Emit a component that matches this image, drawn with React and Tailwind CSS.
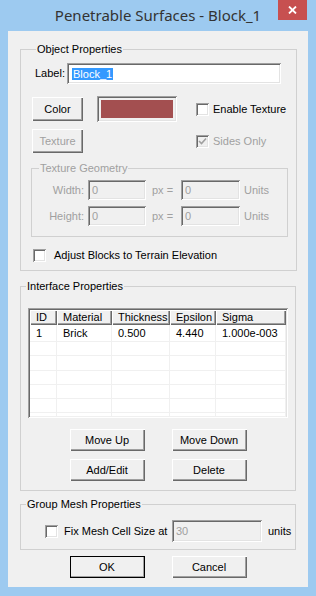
import React from 'react';

const raised =
  'shadow-[inset_1px_1px_0_#ffffff,inset_-1px_-1px_0_#696969,inset_-2px_-2px_0_#a0a0a0]';
const sunken =
  'shadow-[inset_1px_1px_0_#a0a0a0,inset_-1px_-1px_0_#ffffff,inset_2px_2px_0_#696969,inset_-2px_-2px_0_#e3e3e3]';

const Btn = ({ children, disabled, isDefault, className = '' }) => (
  <div
    className={`flex items-center justify-center shrink-0 bg-[#f0f0f0] ${raised} ${
      disabled ? 'text-[#a0a0a0]' : 'text-black'
    } ${isDefault ? 'outline outline-1 outline-black -outline-offset-1' : ''} ${className}`}
  >
    {children}
  </div>
);

const Check = ({ checked, disabled }) => (
  <div
    className={`w-[13px] h-[13px] shrink-0 flex items-center justify-center ${sunken} ${
      disabled ? 'bg-[#f0f0f0]' : 'bg-white'
    }`}
  >
    {checked && (
      <svg width="9" height="9" viewBox="0 0 9 9">
        <path d="M1 4 L3.5 6.5 L8 1.5" fill="none" stroke={disabled ? '#a0a0a0' : '#000'} strokeWidth="1.6" />
      </svg>
    )}
  </div>
);

const Field = ({ value, className = '', disabled }) => (
  <div
    className={`flex items-center shrink-0 pl-[4px] ${sunken} ${
      disabled ? 'bg-[#f0f0f0] text-[#a0a0a0]' : 'bg-white text-black'
    } ${className}`}
  >
    {value}
  </div>
);

const Group = ({ title, disabled, children, className = '', titleClass = 'ml-[5px]' }) => (
  <fieldset className={`border border-[#d0d0d0] ${className}`}>
    <legend className={`${titleClass} px-[1px] leading-[14px] ${disabled ? 'text-[#a0a0a0]' : 'text-black'}`}>
      {title}
    </legend>
    {children}
  </fieldset>
);

const cols = ['ID', 'Material', 'Thickness', 'Epsilon', 'Sigma'];
const rowHeights = ['h-[14px]', 'h-[15px]', 'h-[14px]', 'h-[14px]', 'h-[14px]', 'h-[4px]'];

export default function App() {
  return (
    <div
      className="w-[316px] h-[596px] bg-[#9dcaf0] flex flex-col px-[8px] pb-[9px] text-[11px] leading-[13px] whitespace-nowrap"
      style={{ fontFamily: '"Liberation Sans", Arial, sans-serif' }}
    >
      <div className="h-[31px] relative flex justify-center shrink-0">
        <span
          className="mt-[5px] text-[15px] leading-[20px] text-[#333333]"
          style={{ fontFamily: '"Noto Sans", "Open Sans", sans-serif' }}
        >
          Penetrable Surfaces - Block_1
        </span>
        <div className="absolute right-[1px] top-0 w-[29px] h-[20px] bg-[#c75050] flex items-center justify-center">
          <svg width="9" height="8" viewBox="0 0 9 8">
            <path d="M1 0.5 L8 7.5 M8 0.5 L1 7.5" stroke="#fff" strokeWidth="1.8" />
          </svg>
        </div>
      </div>

      <div className="flex-1 bg-[#f0f0f0] px-[12px] flex flex-col">
        {/* Object Properties */}
        <Group title="Object Properties" className="mt-[11px] pl-[10px] pr-[8px] pb-[8px]">
          <div className="flex items-center mt-[7px] pl-[1px]">
            <span className="w-[35px] pl-[3px]">Label:</span>
            <div className={`w-[214px] h-[21px] bg-white flex items-center pl-[5px] ${sunken}`}>
              <span className="bg-[#3399ff] text-white px-[1px] leading-[12px]">Block_1</span>
            </div>
          </div>

          <div className="flex items-center mt-[12px] pl-[1px]">
            <Btn className="w-[51px] h-[24px]">Color</Btn>
            <div className={`ml-[14px] w-[80px] h-[26px] p-[4px] bg-[#f0f0f0] ${sunken}`}>
              <div className="w-full h-full bg-[#a34f50]" />
            </div>
            <div className="ml-[19px] flex items-center gap-[4px]">
              <Check />
              <span>Enable Texture</span>
            </div>
          </div>

          <div className="flex items-center mt-[7px] pl-[1px]">
            <Btn disabled className="w-[51px] h-[24px]">Texture</Btn>
            <div className="ml-[113px] flex items-center gap-[4px] text-[#a0a0a0]">
              <Check checked disabled />
              <span>Sides Only</span>
            </div>
          </div>

          <Group title="Texture Geometry" disabled titleClass="ml-[7px]" className="mt-[8px] w-[257px] pb-[10px]">
            {['Width:', 'Height:'].map((lbl, i) => (
              <div key={lbl} className={`flex items-center text-[#a0a0a0] ${i === 0 ? 'mt-[5px]' : 'mt-[6px]'}`}>
                <span className="w-[52px] text-right">{lbl}</span>
                <Field disabled value="0" className="ml-[4px] w-[58px] h-[20px]" />
                <span className="w-[35px] pl-[6px]">px =</span>
                <Field disabled value="0" className="w-[59px] h-[20px]" />
                <span className="ml-[4px]">Units</span>
              </div>
            ))}
          </Group>

          <div className="flex items-center mt-[12px] pl-[2px] gap-[8px]">
            <Check />
            <span>Adjust Blocks to Terrain Elevation</span>
          </div>
        </Group>

        {/* Interface Properties */}
        <Group title="Interface Properties" className="mt-[8px] pb-[9px]">
          <div className={`ml-[7px] mt-[15px] w-[260px] h-[110px] bg-white p-[2px] ${sunken}`}>
            <div className="grid grid-cols-[27px_55px_58px_46px_1fr]">
              {cols.map((c) => (
                <div key={c} className={`h-[15px] pl-[6px] flex items-center bg-[#f0f0f0] ${raised}`}>
                  {c}
                </div>
              ))}
              {['1', 'Brick', '0.500', '4.440', '1.000e-003'].map((v, i) => (
                <div
                  key={i}
                  className="h-[17px] pl-[6px] flex items-center border-b border-r border-[#f0f0f0]"
                >
                  {v}
                </div>
              ))}
              {rowHeights.map((h, r) =>
                cols.map((c) => (
                  <div key={`${r}-${c}`} className={`${h} border-b border-r border-[#f0f0f0]`} />
                ))
              )}
            </div>
          </div>

          <div className="flex justify-center gap-[27px] mt-[11px]">
            <Btn className="w-[75px] h-[22px]">Move Up</Btn>
            <Btn className="w-[75px] h-[22px]">Move Down</Btn>
          </div>
          <div className="flex justify-center gap-[27px] mt-[8px]">
            <Btn className="w-[75px] h-[22px]">Add/Edit</Btn>
            <Btn className="w-[75px] h-[22px]">Delete</Btn>
          </div>
        </Group>

        {/* Group Mesh Properties */}
        <Group title="Group Mesh Properties" className="mt-[6px] pb-[7px]">
          <div className="flex items-center mt-[9px] pl-[24px]">
            <Check />
            <span className="ml-[6px] w-[108px]">Fix Mesh Cell Size at</span>
            <Field disabled value="30" className="w-[90px] h-[22px]" />
            <span className="ml-[6px]">units</span>
          </div>
        </Group>

        <div className="flex justify-center gap-[27px] mt-[6px]">
          <Btn isDefault className="w-[75px] h-[22px]">OK</Btn>
          <Btn className="w-[75px] h-[22px]">Cancel</Btn>
        </div>
      </div>
    </div>
  );
}
